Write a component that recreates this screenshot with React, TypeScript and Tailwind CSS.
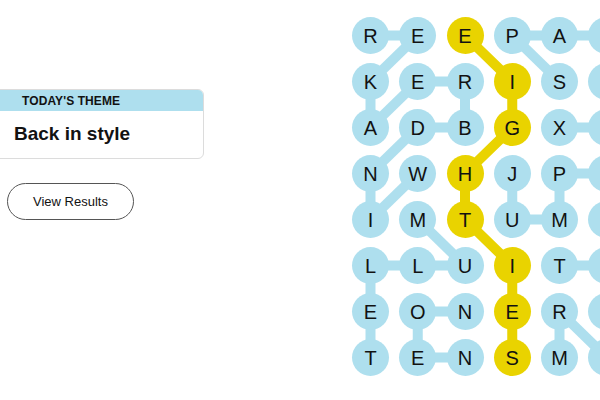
const LETTERS = [
  "REEPA ",
  "KERIS ",
  "ADBGX ",
  "NWHJP ",
  "IMTUM ",
  "LLUIT ",
  "EONER ",
  "TENSM ",
];

type Pt = [number, number];

const BLUE_LINKS: [Pt, Pt][] = [
  [[0, 0], [0, 1]],
  [[0, 1], [1, 0]],
  [[1, 0], [2, 0]],
  [[1, 1], [2, 0]],
  [[1, 1], [1, 2]],
  [[1, 2], [2, 2]],
  [[2, 1], [2, 2]],
  [[2, 1], [3, 0]],
  [[3, 0], [4, 0]],
  [[3, 1], [4, 0]],
  [[0, 3], [0, 4]],
  [[0, 4], [0, 5]],
  [[0, 3], [1, 4]],
  [[0, 5], [1, 5]],
  [[1, 5], [2, 5]],
  [[2, 4], [2, 5]],
  [[3, 3], [4, 3]],
  [[4, 3], [4, 4]],
  [[3, 4], [4, 4]],
  [[3, 4], [3, 5]],
  [[3, 5], [4, 5]],
  [[4, 5], [5, 5]],
  [[5, 4], [5, 5]],
  [[4, 1], [5, 2]],
  [[5, 0], [5, 1]],
  [[5, 1], [5, 2]],
  [[5, 0], [6, 0]],
  [[6, 0], [7, 0]],
  [[6, 1], [6, 2]],
  [[6, 1], [7, 1]],
  [[7, 1], [7, 2]],
  [[6, 4], [7, 4]],
  [[6, 4], [7, 5]],
  [[6, 5], [7, 5]],
];

// EIGHTIES
const SPANGRAM: Pt[] = [
  [0, 2],
  [1, 3],
  [2, 3],
  [3, 2],
  [4, 2],
  [5, 3],
  [6, 3],
  [7, 3],
];

const cx = (c: number) => 18.5 + 47.25 * c;
const cy = (r: number) => 18.5 + 46 * r;

const isSpangram = (r: number, c: number) =>
  SPANGRAM.some(([sr, sc]) => sr === r && sc === c);

function Board() {
  return (
    <div className="relative shrink-0">
      <svg className="absolute left-0 top-0" width="290" height="360">
        {BLUE_LINKS.map(([a, b], i) => (
          <line
            key={i}
            x1={cx(a[1])}
            y1={cy(a[0])}
            x2={cx(b[1])}
            y2={cy(b[0])}
            stroke="#aedfee"
            strokeWidth="10"
          />
        ))}
        <polyline
          points={SPANGRAM.map(([r, c]) => `${cx(c)},${cy(r)}`).join(" ")}
          fill="none"
          stroke="#e9d300"
          strokeWidth="10"
          strokeLinejoin="round"
        />
      </svg>
      <div className="relative grid grid-cols-[repeat(6,37px)] gap-x-[10.25px] gap-y-[9px]">
        {LETTERS.flatMap((row, r) =>
          row.split("").map((ch, c) => (
            <div
              key={`${r}-${c}`}
              className={`flex h-[37px] w-[37px] items-center justify-center rounded-full text-[20px] text-[#121212] ${
                isSpangram(r, c) ? "bg-[#e9d300]" : "bg-[#aedfee]"
              }`}
            >
              {ch.trim()}
            </div>
          ))
        )}
      </div>
    </div>
  );
}

export default function App() {
  return (
    <div className="flex h-[400px] w-[600px] overflow-hidden bg-white font-['Liberation_Sans',Arial,sans-serif]">
      <div className="w-[352px] shrink-0 pt-[89px]">
        <div className="-ml-4 w-[220px] overflow-hidden rounded-md border border-[#dcdcdc]">
          <div className="flex h-[21px] items-center bg-[#aedfee] pl-[37px] text-[12px] font-bold tracking-[0.1px] text-[#121212]">
            TODAY&apos;S THEME
          </div>
          <div className="flex h-[47px] items-center pl-[29px] text-[19px] font-bold text-[#121212]">
            Back in style
          </div>
        </div>
        <button className="ml-[7px] mt-[24px] flex h-[37px] w-[127px] items-center justify-center rounded-full border border-[#555555] text-[13px] text-[#121212]">
          View Results
        </button>
      </div>
      <div className="pt-[17px]">
        <Board />
      </div>
    </div>
  );
}
